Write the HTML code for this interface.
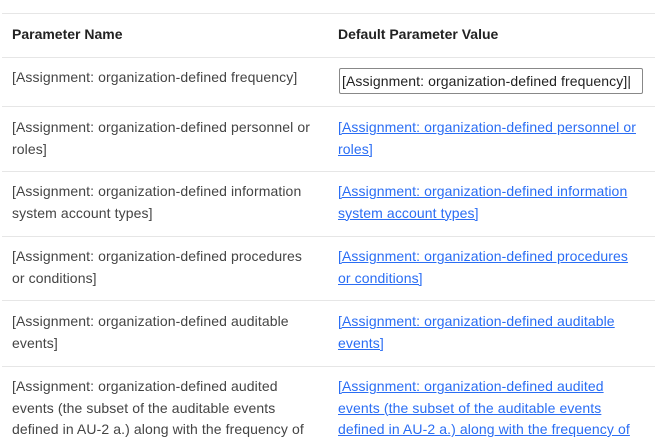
<!DOCTYPE html>
<html><head><meta charset="utf-8"><style>
body{margin:0;background:#fff;font-family:"Liberation Sans",Arial,sans-serif;font-size:14px;color:#444;width:667px;height:444px;overflow:hidden;position:relative}
.l{position:absolute;left:2px;width:653px;height:1px;background:#e6e6e6}
.c{position:absolute;line-height:21.5px;letter-spacing:0.1px;white-space:nowrap}
.a{left:12px}
.b{left:338px;color:#2a6df4;text-decoration:underline}
.h{font-weight:bold;color:#222;letter-spacing:0}
.inp{position:absolute;left:339px;top:68px;width:304px;height:26px;border:1px solid #888;border-radius:2px;box-sizing:border-box;padding:3px 2px;line-height:18px;color:#222;letter-spacing:0.1px;white-space:nowrap;overflow:hidden}
</style></head><body>
<div class="l" style="top:13px"></div>
<div class="c a h" style="top:24px">Parameter Name</div>
<div class="c h" style="left:338px;top:24px">Default Parameter Value</div>
<div class="l" style="top:57px"></div>
<div class="c a" style="top:67px">[Assignment: organization-defined frequency]</div>
<div class="inp">[Assignment: organization-defined frequency]|</div>
<div class="l" style="top:106px"></div>
<div class="c a" style="top:117px">[Assignment: organization-defined personnel or<br>roles]</div>
<div class="c b" style="top:117px">[Assignment: organization-defined personnel or<br>roles]</div>
<div class="l" style="top:171px"></div>
<div class="c a" style="top:181px">[Assignment: organization-defined information<br>system account types]</div>
<div class="c b" style="top:181px">[Assignment: organization-defined information<br>system account types]</div>
<div class="l" style="top:236px"></div>
<div class="c a" style="top:246px">[Assignment: organization-defined procedures<br>or conditions]</div>
<div class="c b" style="top:246px">[Assignment: organization-defined procedures<br>or conditions]</div>
<div class="l" style="top:300px"></div>
<div class="c a" style="top:311px">[Assignment: organization-defined auditable<br>events]</div>
<div class="c b" style="top:311px">[Assignment: organization-defined auditable<br>events]</div>
<div class="l" style="top:366px"></div>
<div class="c a" style="top:376px">[Assignment: organization-defined audited<br>events (the subset of the auditable events<br>defined in AU-2 a.) along with the frequency of</div>
<div class="c b" style="top:376px">[Assignment: organization-defined audited<br>events (the subset of the auditable events<br>defined in AU-2 a.) along with the frequency of</div>
</body></html>
